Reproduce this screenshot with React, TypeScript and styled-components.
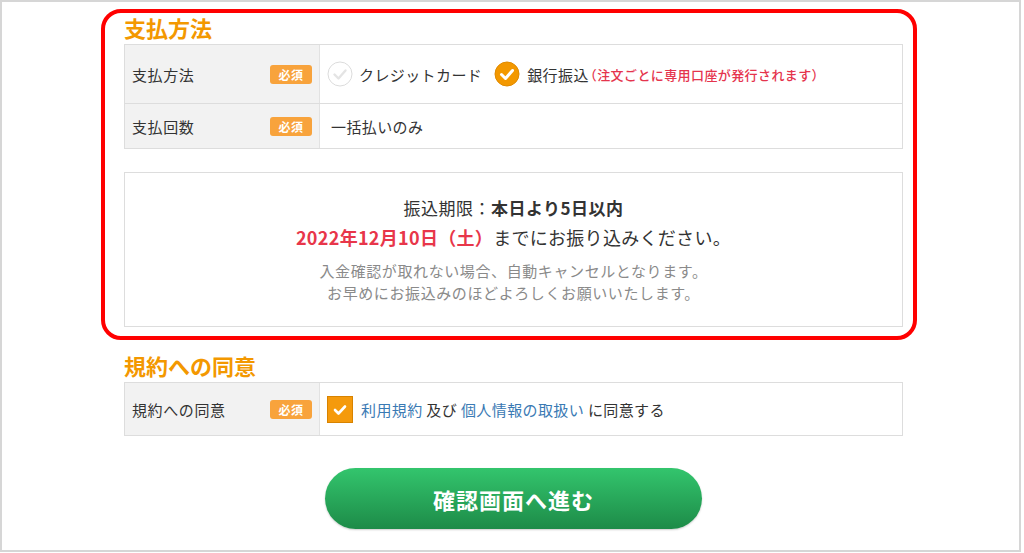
import React from "react";
import styled, { createGlobalStyle } from "styled-components";

const GlobalStyle = createGlobalStyle`
  * { box-sizing: border-box; }
  html, body { margin: 0; padding: 0; background: #fff; }
  body {
    font-family: "Noto Sans CJK JP", "Noto Sans", sans-serif;
    color: #333;
  }
`;

const Frame = styled.div`
  width: 1021px;
  height: 552px;
  border: 2px solid #d6d6d6;
  padding-top: 7px;
  overflow: hidden;
`;

const Column = styled.div`
  margin-left: 99px;
  width: 816px;
`;

const Highlight = styled.section`
  border: 4px solid #f00;
  border-radius: 20px;
  padding: 0 10px 9px 19px;
`;

const Plain = styled.section`
  padding: 0 14px 0 23px;
  margin-top: 11px;
`;

const Heading = styled.h2`
  margin: 0 0 3px;
  font-size: 22px;
  line-height: 28px;
  font-weight: 700;
  color: #f39800;
`;

const Table = styled.div`
  border: 1px solid #ddd;
`;

const Row = styled.div<{ $h: number }>`
  display: grid;
  grid-template-columns: 195px 1fr;
  height: ${(p) => p.$h}px;
  & + & {
    border-top: 1px solid #ddd;
  }
`;

const Label = styled.div`
  background: #f2f2f2;
  border-right: 1px solid #e2e2e2;
  display: flex;
  align-items: center;
  justify-content: space-between;
  padding: 0 7px 0 7px;
  font-size: 15px;
  letter-spacing: 0.6px;
`;

const Badge = styled.span`
  width: 42px;
  height: 19px;
  border-radius: 3px;
  background: #f8a33c;
  color: #fff;
  font-size: 12px;
  font-weight: 700;
  display: flex;
  align-items: center;
  justify-content: center;
  letter-spacing: 0.5px;
`;

const Cell = styled.div<{ $pad?: number }>`
  display: flex;
  align-items: center;
  padding-left: ${(p) => p.$pad ?? 7}px;
  font-size: 15px;
  letter-spacing: 0.4px;
`;

const Option = styled.label<{ $gap: number; $after?: number }>`
  display: flex;
  align-items: center;
  gap: ${(p) => p.$gap}px;
  margin-right: ${(p) => p.$after ?? 0}px;
`;

const Note = styled.span`
  color: #e5344d;
  font-size: 13px;
  font-weight: 500;
  letter-spacing: 0.4px;
  margin-left: -5px;
  margin-top: 1px;
`;

const Link = styled.a`
  color: #3a7ab4;
  text-decoration: none;
`;

const Info = styled.div`
  margin-top: 23px;
  border: 1px solid #ddd;
  padding: 21px 0 22px;
  text-align: center;
`;

const Deadline = styled.p`
  margin: 0;
  font-size: 17px;
  line-height: 28px;
  letter-spacing: 0.5px;
  b { font-weight: 700; }
`;

const Due = styled.p`
  margin: 0 0 8px;
  font-size: 18px;
  line-height: 30px;
  letter-spacing: 0.3px;
  strong { color: #e8364a; font-weight: 700; }
`;

const Caution = styled.p`
  margin: 0;
  font-size: 15px;
  line-height: 22px;
  color: #8a8a8a;
  letter-spacing: 0.6px;
`;

const Actions = styled.div`
  display: flex;
  justify-content: center;
  margin-top: 32px;
`;

const SubmitButton = styled.button`
  width: 377px;
  height: 61px;
  border: none;
  border-radius: 31px;
  background: linear-gradient(#33c56d, #1d8b48);
  box-shadow: 0 1px 2px rgba(0, 0, 0, 0.2);
  color: #fff;
  font-family: inherit;
  font-size: 22px;
  font-weight: 700;
  letter-spacing: 1px;
  cursor: pointer;
`;

function Radio({ checked }: { checked?: boolean }) {
  return (
    <svg width="26" height="26" viewBox="0 0 26 26">
      <circle
        cx="13"
        cy="13"
        r="12"
        fill={checked ? "#f39800" : "#fff"}
        stroke={checked ? "#e08a00" : "#dcdcdc"}
        strokeWidth="1"
      />
      <path
        d="M7.5 13.5 L11.5 17.5 L18.5 9.5"
        fill="none"
        stroke={checked ? "#fff" : "#e4e4e4"}
        strokeWidth={checked ? 3 : 2.4}
        strokeLinecap="round"
        strokeLinejoin="round"
      />
    </svg>
  );
}

function CheckBox() {
  return (
    <svg width="26" height="27" viewBox="0 0 26 27">
      <rect x="0.5" y="0.5" width="25" height="26" fill="#f59a0c" stroke="#d88300" />
      <path
        d="M8 14 L11.5 17.5 L18 10.5"
        fill="none"
        stroke="#fff"
        strokeWidth="2.6"
        strokeLinecap="round"
        strokeLinejoin="round"
      />
    </svg>
  );
}

export default function App(): React.ReactElement {
  return (
    <>
      <GlobalStyle />
      <Frame>
        <Column>
          <Highlight>
            <Heading>支払方法</Heading>
            <Table>
              <Row $h={58}>
                <Label>
                  支払方法<Badge>必須</Badge>
                </Label>
                <Cell>
                  <Option $gap={6} $after={12}>
                    <Radio />
                    クレジットカード
                  </Option>
                  <Option $gap={7}>
                    <Radio checked />
                    銀行振込
                  </Option>
                  <Note>（注文ごとに専用口座が発行されます）</Note>
                </Cell>
              </Row>
              <Row $h={45}>
                <Label>
                  支払回数<Badge>必須</Badge>
                </Label>
                <Cell $pad={11}>一括払いのみ</Cell>
              </Row>
            </Table>
            <Info>
              <Deadline>
                振込期限：<b>本日より5日以内</b>
              </Deadline>
              <Due>
                <strong>2022年12月10日（土）</strong>までにお振り込みください。
              </Due>
              <Caution>入金確認が取れない場合、自動キャンセルとなります。</Caution>
              <Caution>お早めにお振込みのほどよろしくお願いいたします。</Caution>
            </Info>
          </Highlight>
          <Plain>
            <Heading>規約への同意</Heading>
            <Table>
              <Row $h={52}>
                <Label>
                  規約への同意<Badge>必須</Badge>
                </Label>
                <Cell>
                  <Option $gap={8}>
                    <CheckBox />
                    <span>
                      <Link href="#">利用規約</Link> 及び{" "}
                      <Link href="#">個人情報の取扱い</Link> に同意する
                    </span>
                  </Option>
                </Cell>
              </Row>
            </Table>
            <Actions>
              <SubmitButton type="button">確認画面へ進む</SubmitButton>
            </Actions>
          </Plain>
        </Column>
      </Frame>
    </>
  );
}
